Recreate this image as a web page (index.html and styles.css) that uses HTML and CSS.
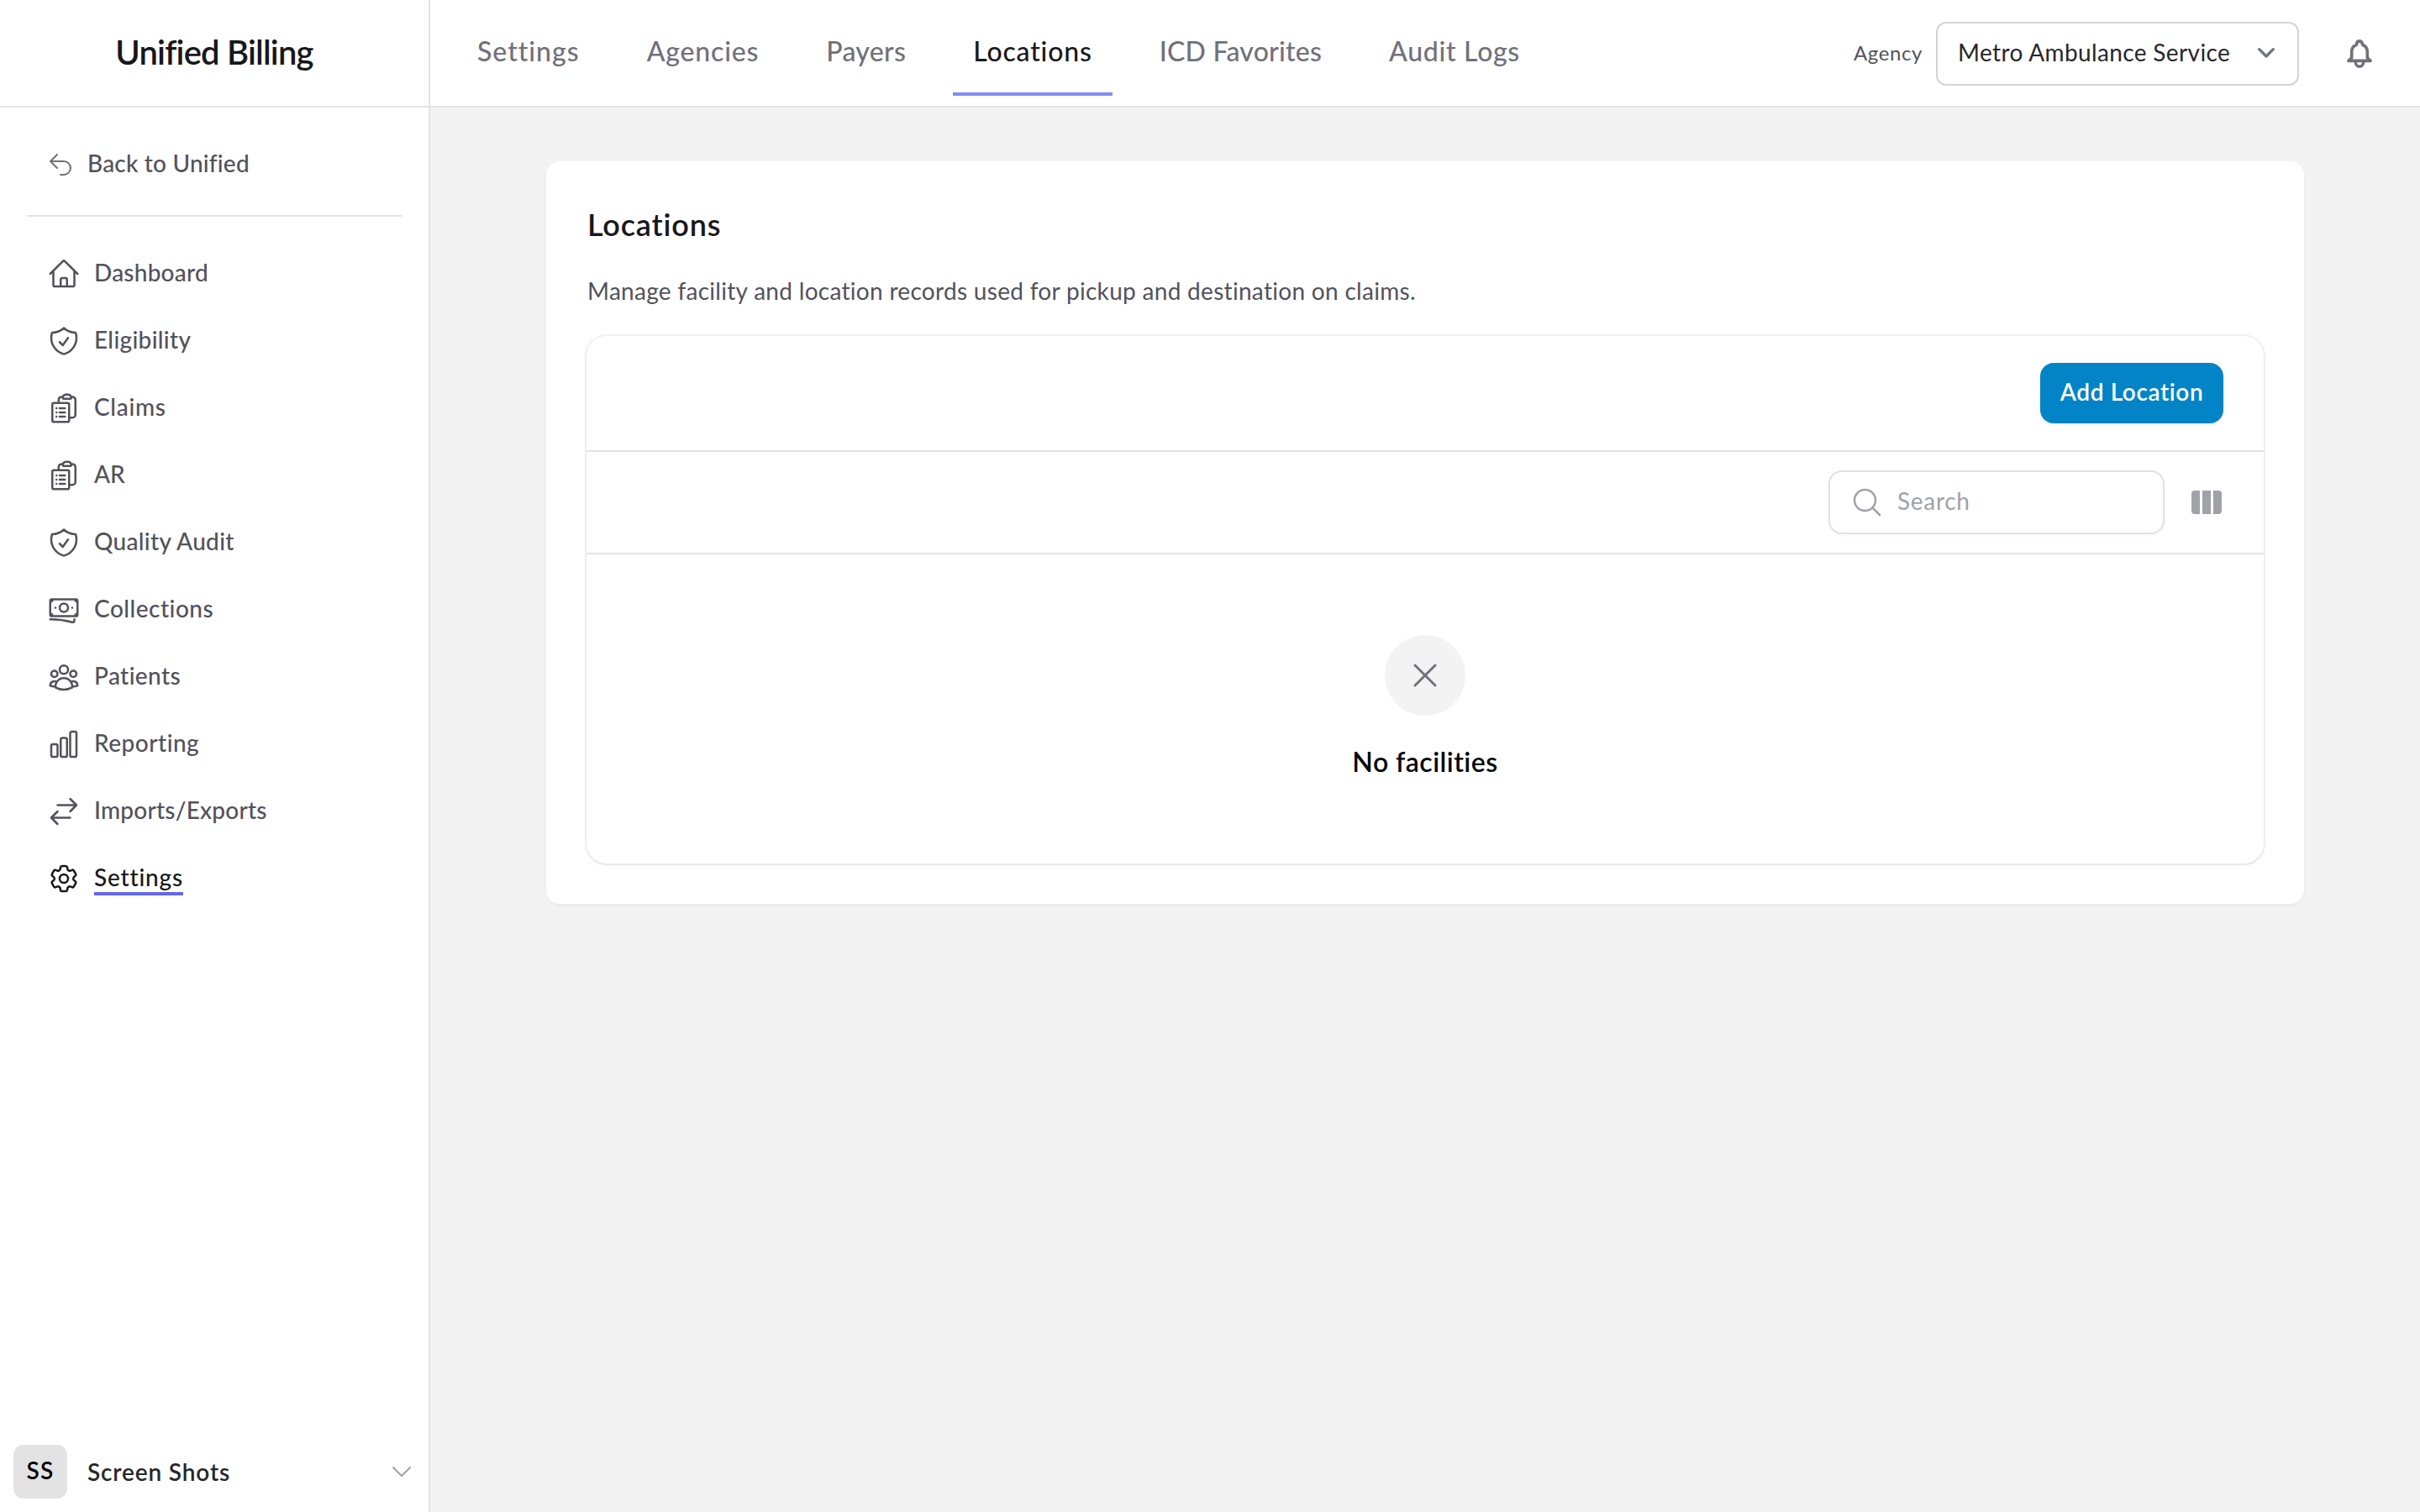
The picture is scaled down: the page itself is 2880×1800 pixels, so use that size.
FILE: index.html
```html
<!DOCTYPE html>
<html lang="en">
<head>
<meta charset="utf-8">
<title>Unified Billing - Locations</title>
<link rel="stylesheet" href="styles.css">
</head>
<body>
<svg class="sprite" aria-hidden="true">
  <symbol id="shield" viewBox="0 0 24 24"><path d="M9 12.75 11.25 15 15 9.75m-3-7.036A11.959 11.959 0 0 1 3.598 6 11.99 11.99 0 0 0 3 9.749c0 5.592 3.824 10.29 9 11.623 5.176-1.332 9-6.03 9-11.622 0-1.31-.21-2.571-.598-3.751h-.152c-3.196 0-6.1-1.248-8.25-3.285Z"/></symbol>
  <symbol id="clipboard" viewBox="0 0 24 24"><path d="M9 12h3.75M9 15h3.75M9 18h3.75m3 .75H18a2.25 2.25 0 0 0 2.25-2.25V6.108c0-1.135-.845-2.098-1.976-2.192a48.424 48.424 0 0 0-1.123-.08m-5.801 0c-.065.21-.1.433-.1.664 0 .414.336.75.75.75h4.5a.75.75 0 0 0 .75-.75 2.25 2.25 0 0 0-.1-.664m-5.8 0A2.251 2.251 0 0 1 13.5 2.25H15c1.012 0 1.867.668 2.15 1.586m-5.8 0c-.376.023-.75.05-1.124.08C9.095 4.01 8.25 4.973 8.25 6.108V8.25m0 0H4.875c-.621 0-1.125.504-1.125 1.125v11.25c0 .621.504 1.125 1.125 1.125h9.75c.621 0 1.125-.504 1.125-1.125V9.375c0-.621-.504-1.125-1.125-1.125H8.25ZM6.75 12h.008v.008H6.75V12Zm0 3h.008v.008H6.75V15Zm0 3h.008v.008H6.75V18Z"/></symbol>
</svg>
<div class="app">
  <aside class="sidebar">
    <div class="brand"><span class="brand-name">Unified Billing</span></div>
    <a class="back">
      <svg class="icon icon-sm" viewBox="0 0 24 24"><path d="M9 15 3 9m0 0 6-6M3 9h12a6 6 0 0 1 0 12h-3"/></svg>
      <span class="back-label">Back to Unified</span>
    </a>
    <hr class="rule">
    <nav class="nav">
      <a class="nav-item"><svg class="icon" viewBox="0 0 24 24"><path d="m2.25 12 8.954-8.955c.44-.439 1.152-.439 1.591 0L21.75 12M4.5 9.75v10.125c0 .621.504 1.125 1.125 1.125H9.75v-4.875c0-.621.504-1.125 1.125-1.125h2.25c.621 0 1.125.504 1.125 1.125V21h4.125c.621 0 1.125-.504 1.125-1.125V9.75M8.25 21h8.25"/></svg><span class="label track-2">Dashboard</span></a>
      <a class="nav-item"><svg class="icon"><use href="#shield"/></svg><span class="label track-3">Eligibility</span></a>
      <a class="nav-item"><svg class="icon"><use href="#clipboard"/></svg><span class="label track-7">Claims</span></a>
      <a class="nav-item"><svg class="icon"><use href="#clipboard"/></svg><span class="label track-0">AR</span></a>
      <a class="nav-item"><svg class="icon"><use href="#shield"/></svg><span class="label track-3">Quality Audit</span></a>
      <a class="nav-item"><svg class="icon" viewBox="0 0 24 24"><path d="M2.25 18.75a60.07 60.07 0 0 1 15.797 2.101c.727.198 1.453-.342 1.453-1.096V18.75M3.75 4.5v.75A.75.75 0 0 1 3 6h-.75m0 0v-.375c0-.621.504-1.125 1.125-1.125H20.25M2.25 6v9m18-10.5v.75c0 .414.336.75.75.75h.75m-1.5-1.5h.375c.621 0 1.125.504 1.125 1.125v9.75c0 .621-.504 1.125-1.125 1.125h-.375m1.5-1.5H21a.75.75 0 0 0-.75.75v.75m0 0H3.75m0 0h-.375a1.125 1.125 0 0 1-1.125-1.125V15m1.5 1.5v-.75A.75.75 0 0 0 3 15h-.75M15 10.5a3 3 0 1 1-6 0 3 3 0 0 1 6 0Zm3 0h.008v.008H18V10.5Zm-12 0h.008v.008H6V10.5Z"/></svg><span class="label track-5">Collections</span></a>
      <a class="nav-item"><svg class="icon" viewBox="0 0 24 24"><path d="M18 18.72a9.094 9.094 0 0 0 3.741-.479 3 3 0 0 0-4.682-2.72m.94 3.198.001.031c0 .225-.012.447-.037.666A11.944 11.944 0 0 1 12 21c-2.17 0-4.207-.576-5.963-1.584A6.062 6.062 0 0 1 6 18.719m12 0a5.971 5.971 0 0 0-.941-3.197m0 0A5.995 5.995 0 0 0 12 12.75a5.995 5.995 0 0 0-5.058 2.772m0 0a3 3 0 0 0-4.681 2.72 8.986 8.986 0 0 0 3.74.477m.94-3.197a5.971 5.971 0 0 0-.94 3.197M15 6.75a3 3 0 1 1-6 0 3 3 0 0 1 6 0Zm6 3a2.25 2.25 0 1 1-4.5 0 2.25 2.25 0 0 1 4.5 0Zm-13.5 0a2.25 2.25 0 1 1-4.5 0 2.25 2.25 0 0 1 4.5 0Z"/></svg><span class="label track-4">Patients</span></a>
      <a class="nav-item"><svg class="icon" viewBox="0 0 24 24"><path d="M3 13.125C3 12.504 3.504 12 4.125 12h2.25c.621 0 1.125.504 1.125 1.125v6.75C7.5 20.496 6.996 21 6.375 21h-2.25A1.125 1.125 0 0 1 3 19.875v-6.75ZM9.75 8.625c0-.621.504-1.125 1.125-1.125h2.25c.621 0 1.125.504 1.125 1.125v11.25c0 .621-.504 1.125-1.125 1.125h-2.25a1.125 1.125 0 0 1-1.125-1.125V8.625ZM16.5 4.125c0-.621.504-1.125 1.125-1.125h2.25C20.496 3 21 3.504 21 4.125v15.75c0 .621-.504 1.125-1.125 1.125h-2.25a1.125 1.125 0 0 1-1.125-1.125V4.125Z"/></svg><span class="label track-5">Reporting</span></a>
      <a class="nav-item"><svg class="icon" viewBox="0 0 24 24"><path d="M7.5 21 3 16.5m0 0L7.5 12M3 16.5h13.5m0-13.5L21 7.5m0 0L16.5 12M21 7.5H7.5"/></svg><span class="label track-2">Imports/Exports</span></a>
      <a class="nav-item is-active"><svg class="icon" viewBox="0 0 24 24"><path d="M9.594 3.94c.09-.542.56-.94 1.11-.94h2.593c.55 0 1.02.398 1.11.94l.213 1.281c.063.374.313.686.645.87.074.04.147.083.22.127.325.196.72.257 1.075.124l1.217-.456a1.125 1.125 0 0 1 1.37.49l1.296 2.247a1.125 1.125 0 0 1-.26 1.431l-1.003.827c-.293.241-.438.613-.43.992a7.723 7.723 0 0 1 0 .255c-.008.378.137.75.43.991l1.004.827c.424.35.534.955.26 1.43l-1.298 2.247a1.125 1.125 0 0 1-1.369.491l-1.217-.456c-.355-.133-.75-.072-1.076.124a6.47 6.47 0 0 1-.22.128c-.331.183-.581.495-.644.869l-.213 1.281c-.09.543-.56.94-1.11.94h-2.594c-.55 0-1.019-.398-1.11-.94l-.213-1.281c-.062-.374-.312-.686-.644-.87a6.52 6.52 0 0 1-.22-.127c-.325-.196-.72-.257-1.076-.124l-1.217.456a1.125 1.125 0 0 1-1.369-.49l-1.297-2.247a1.125 1.125 0 0 1 .26-1.431l1.004-.827c.292-.24.437-.613.43-.991a6.932 6.932 0 0 1 0-.255c.007-.38-.138-.751-.43-.992l-1.004-.827a1.125 1.125 0 0 1-.26-1.43l1.297-2.247a1.125 1.125 0 0 1 1.37-.491l1.216.456c.356.133.751.072 1.076-.124.072-.044.146-.086.22-.128.332-.183.582-.495.644-.869l.214-1.28Z"/><path d="M15 12a3 3 0 1 1-6 0 3 3 0 0 1 6 0Z"/></svg><span class="label track-8">Settings</span></a>
    </nav>
    <div class="user">
      <span class="avatar">SS</span>
      <span class="user-name">Screen Shots</span>
      <svg class="icon icon-sm user-chevron" viewBox="0 0 24 24"><path d="m19.5 8.25-7.5 7.5-7.5-7.5"/></svg>
    </div>
  </aside>

  <div class="page">
    <header class="topbar">
      <nav class="tabs">
        <a class="tab track-10">Settings</a>
        <a class="tab track-8">Agencies</a>
        <a class="tab track-3">Payers</a>
        <a class="tab is-active track-8">Locations</a>
        <a class="tab track-2">ICD Favorites</a>
        <a class="tab track-7">Audit Logs</a>
      </nav>
      <div class="tools">
        <span class="agency-label">Agency</span>
        <div class="select">
          <span class="select-value">Metro Ambulance Service</span>
          <svg class="select-chevron" viewBox="0 0 20 12"><path d="M1.7 1.7 10 10l8.3-8.3"/></svg>
        </div>
        <svg class="bell" viewBox="0 0 30 34"><path d="M2 25.4h26L24.3 21.8V14.6C24.3 10.6 22 7.6 18.5 6.3 18.5 3.4 17.2 1.9 15 1.9S11.5 3.4 11.5 6.3C8 7.6 5.7 10.6 5.700 14.600V21.800L2 25.400ZM10.200 26.500a4.800 5.700 0 0 0 9.600 0"/></svg>
      </div>
    </header>

    <main class="card">
      <h1 class="title">Locations</h1>
      <p class="desc">Manage facility and location records used for pickup and destination on claims.</p>
      <section class="table">
        <div class="table-actions"><button class="btn">Add Location</button></div>
        <div class="table-tools">
          <div class="search">
            <svg class="icon" viewBox="0 0 24 24"><path d="m21 21-5.197-5.197m0 0A7.500 7.500 0 1 0 5.196 5.196a7.500 7.500 0 0 0 10.607 10.607Z"/></svg>
            <span class="search-text">Search</span>
          </div>
          <svg class="columns" viewBox="0 0 40 40"><path d="M6 6h6v28H6a4 4 0 0 1-4-4V10a4 4 0 0 1 4-4ZM15 6h10v28H15ZM28 6h6a4 4 0 0 1 4 4v20a4 4 0 0 1-4 4h-6Z"/></svg>
        </div>
        <div class="empty">
          <span class="empty-badge"><svg class="icon icon-lg" viewBox="0 0 24 24"><path d="M6 18 18 6M6 6l12 12"/></svg></span>
          <span class="empty-title">No facilities</span>
        </div>
      </section>
    </main>
  </div>
</div>
</body>
</html>
```
FILE: styles.css
```css
* { box-sizing: border-box; }

body {
  margin: 0;
  font-family: "Lato", sans-serif;
  font-size: 28px;
  line-height: 40px;
  font-variant-ligatures: none;
  color: #18181b;
  background: #f3f3f3;
}

.sprite { display: none; }

.app { display: flex; height: 1800px; }

.icon {
  flex: none;
  display: block;
  width: 40px;
  height: 40px;
  fill: none;
  stroke: currentColor;
  stroke-width: 1.5;
  stroke-linecap: round;
  stroke-linejoin: round;
}
.icon-sm { width: 32px; height: 32px; }
.icon-lg { width: 48px; height: 48px; }

/* Per-word tracking */
.track-0 { letter-spacing: 0; }
.track-2 { letter-spacing: 0.22px; }
.track-3 { letter-spacing: 0.32px; }
.track-4 { letter-spacing: 0.4px; }
.track-5 { letter-spacing: 0.5px; }
.track-7 { letter-spacing: 0.7px; }
.track-8 { letter-spacing: 0.82px; }
.track-10 { letter-spacing: 1px; }

/* Sidebar */
.sidebar {
  flex: none;
  display: flex;
  flex-direction: column;
  width: 512px;
  background: #fff;
  border-right: 2px solid #e3e3e4;
}
.brand {
  display: flex;
  justify-content: center;
  height: 128px;
  padding-top: 36px;
  border-bottom: 2px solid #e3e3e4;
}
.brand-name {
  font-size: 40px;
  line-height: 52px;
  font-weight: 600;
  letter-spacing: -0.8px;
}
.back {
  display: flex;
  align-items: center;
  gap: 16px;
  height: 48px;
  margin: 44px 0 36px;
  padding-left: 56px;
  color: #71717a;
}
.back-label {
  padding-bottom: 4px;
  color: #52525b;
  font-weight: 500;
  letter-spacing: 0.2px;
}
.rule {
  width: 446px;
  height: 2px;
  margin: 0 auto;
  border: 0;
  background: #e3e3e4;
}
.nav {
  display: flex;
  flex-direction: column;
  gap: 24px;
  padding: 40px 56px 0;
}
.nav-item {
  display: flex;
  align-items: center;
  gap: 16px;
  height: 56px;
  color: #52525b;
  font-weight: 500;
}
.label {
  margin-bottom: 2px;
  padding-top: 2px;
  line-height: 36px;
  border-bottom: 4px solid transparent;
}
.nav-item.is-active { color: #18181b; }
.nav-item.is-active .label { border-color: #6366f1; }

.user {
  display: flex;
  align-items: center;
  margin-top: auto;
  padding: 16px;
}
.avatar {
  display: flex;
  align-items: center;
  justify-content: center;
  width: 64px;
  height: 64px;
  padding-bottom: 4px;
  border-radius: 12px;
  background: #e3e3e4;
  color: #000;
  font-weight: 600;
  letter-spacing: 1.2px;
}
.user-name {
  margin-left: 24px;
  color: #27272a;
  font-weight: 600;
  letter-spacing: 0.85px;
}
.user-chevron { margin-left: auto; color: #a1a1aa; }

/* Top bar */
.page { flex: 1; min-width: 0; }
.topbar {
  display: flex;
  justify-content: space-between;
  height: 128px;
  padding: 0 57px 0 32px;
  background: #fff;
  border-bottom: 2px solid #e3e3e4;
}
.tabs { display: flex; align-items: flex-start; gap: 32px; padding-top: 10px; }
.tab {
  padding: 2px 24px 0;
  font-size: 32px;
  line-height: 98px;
  font-weight: 500;
  color: #71717a;
  border-bottom: 4px solid transparent;
}
.tab.is-active { color: #18181b; border-color: #818cf8; }
.tools { display: flex; align-items: center; padding-top: 2px; }
.agency-label {
  margin-right: 16px;
  padding-bottom: 2px;
  font-size: 24px;
  color: #52525b;
  letter-spacing: 0.6px;
}
.select {
  display: flex;
  align-items: center;
  justify-content: space-between;
  width: 432px;
  height: 76px;
  padding: 0 27px 0 24px;
  border: 2px solid #d4d4d8;
  border-radius: 12px;
}
.select-value { padding-bottom: 4px; color: #27272a; letter-spacing: 0.37px; }
.select-chevron {
  width: 20px;
  height: 12px;
  margin-bottom: 2px;
  fill: none;
  stroke: #6b7280;
  stroke-width: 3.2;
  stroke-linecap: round;
  stroke-linejoin: round;
}
.bell {
  width: 30px;
  height: 34px;
  margin-left: 57px;
  fill: none;
  stroke: #71717a;
  stroke-width: 3.6;
  stroke-linejoin: round;
}

/* Card */
.card {
  width: 2092px;
  margin: 64px auto 0;
  padding: 48px;
  background: #fff;
  border-radius: 16px;
  box-shadow: 0 2px 4px rgba(0, 0, 0, 0.05);
}
.title {
  margin: 0;
  padding: 1px 0 0 1px;
  font-size: 36px;
  line-height: 52px;
  font-weight: 600;
  letter-spacing: 0.85px;
}
.desc { margin: 33px 0 34px; padding-left: 1px; color: #52525b; letter-spacing: 0.3px; }
.table {
  border-radius: 24px;
  box-shadow: 0 0 0 2px rgba(9, 9, 11, 0.06), 0 2px 4px rgba(0, 0, 0, 0.05);
}
.table-actions,
.table-tools {
  display: flex;
  align-items: center;
  justify-content: flex-end;
  padding-right: 48px;
  border-bottom: 2px solid #e3e3e4;
}
.table-actions { height: 138px; }
.table-tools { height: 122px; gap: 30px; }
.btn {
  width: 218px;
  height: 72px;
  padding: 0 0 4px;
  border: 0;
  border-radius: 16px;
  background: #0284c7;
  box-shadow: 0 2px 4px rgba(0, 0, 0, 0.05);
  color: #fff;
  font: 600 28px/40px "Lato", sans-serif;
  letter-spacing: 0.6px;
}
.search {
  display: flex;
  align-items: center;
  gap: 16px;
  width: 400px;
  height: 76px;
  padding-left: 24px;
  border: 2px solid #e1e1e2;
  border-radius: 16px;
  box-shadow: 0 2px 4px rgba(0, 0, 0, 0.03);
  color: #a1a1aa;
}
.search-text { padding-bottom: 4px; letter-spacing: 0.7px; }
.columns { width: 40px; height: 40px; fill: #a1a1aa; }
.empty {
  display: flex;
  flex-direction: column;
  align-items: center;
  height: 368px;
  padding-top: 96px;
}
.empty-badge {
  display: flex;
  align-items: center;
  justify-content: center;
  width: 96px;
  height: 96px;
  border-radius: 50%;
  background: #f3f3f3;
  color: #71717a;
}
.empty-title {
  margin-top: 31px;
  font-size: 32px;
  line-height: 48px;
  font-weight: 600;
  letter-spacing: 0.47px;
  color: #09090b;
}
```
